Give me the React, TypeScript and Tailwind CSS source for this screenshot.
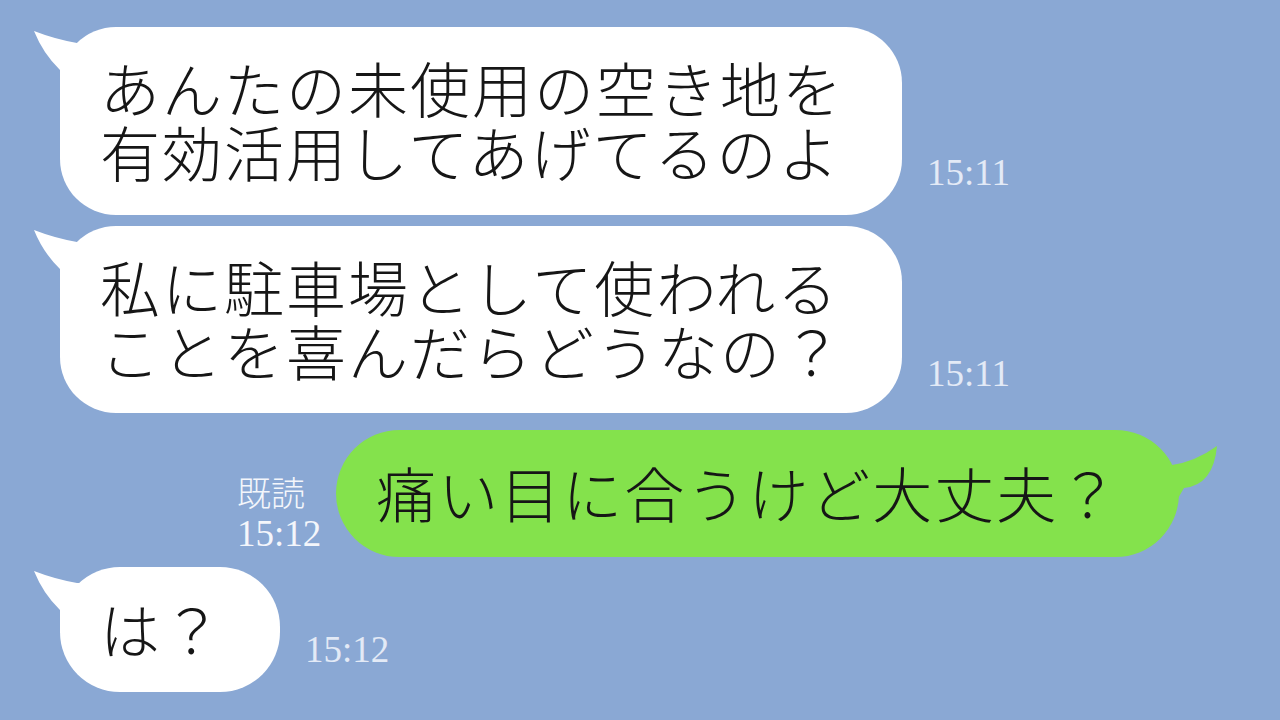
import React from "react";

const jp = {
  fontFamily:
    '"Noto Sans CJK JP Light", "Noto Sans CJK JP DemiLight", "Noto Sans CJK JP", "Noto Sans", sans-serif',
};
const serif = { fontFamily: '"Liberation Serif", "DejaVu Serif", serif' };

function LeftTail() {
  return (
    <svg
      className="absolute left-[-30px] top-0"
      width="80"
      height="70"
      viewBox="0 0 80 70"
    >
      <path
        d="M4 4 Q24.5 12 47 16 L60 16 L60 66 L30 66 L30 43 Q13 26.5 4 4 Z"
        fill="#ffffff"
      />
    </svg>
  );
}

function RightTail() {
  return (
    <svg
      className="absolute right-[-43px] top-0"
      width="60"
      height="80"
      viewBox="0 0 60 80"
    >
      <path
        d="M55 16 Q33.5 31.5 10 35 L0 35 L0 70 L15 70 L22 58 Q51.5 55 55 16 Z"
        fill="#84e24c"
      />
    </svg>
  );
}

function Time({ t, mb }: { t: string; mb: string }) {
  return (
    <div
      className={`text-[37px] leading-[37px] font-light text-[#e3eaf6] ml-[25px] ${mb}`}
      style={serif}
    >
      {t}
    </div>
  );
}

const textCls =
  "relative text-[60px] leading-[64px] font-light tracking-[2px] text-[#161616] whitespace-nowrap mt-[-4px]";

export default function App() {
  return (
    <div className="w-[1280px] h-[720px] bg-[#8aa8d4] flex flex-col pt-[27px] overflow-hidden">
      {/* Row 1 */}
      <div className="flex items-end pl-[60px]">
        <div className="relative w-[842px] h-[188px] bg-white rounded-[56px] flex items-center pl-[40px]">
          <LeftTail />
          <div className={textCls} style={jp}>
            <div>あんたの未使用の空き地を</div>
            <div>有効活用してあげてるのよ</div>
          </div>
        </div>
        <Time t="15:11" mb="mb-[24px]" />
      </div>

      {/* Row 2 */}
      <div className="flex items-end pl-[60px] mt-[11px]">
        <div className="relative w-[842px] h-[187px] bg-white rounded-[56px] flex items-center pl-[40px]">
          <LeftTail />
          <div className={textCls} style={jp}>
            <div>私に駐車場として使われる</div>
            <div>ことを喜んだらどうなの？</div>
          </div>
        </div>
        <Time t="15:11" mb="mb-[21px]" />
      </div>

      {/* Row 3 */}
      <div className="flex items-end pl-[237px] mt-[17px]">
        <div className="flex flex-col mb-[5px] mr-[15px] text-[#f4f6fb]">
          <div
            className="text-[34px] leading-[34px] font-light mb-[6px]"
            style={jp}
          >
            既読
          </div>
          <div className="text-[37px] leading-[37px]" style={serif}>
            15:12
          </div>
        </div>
        <div className="relative w-[843px] h-[127px] bg-[#84e24c] rounded-full flex items-center pl-[40px]">
          <RightTail />
          <div className={textCls} style={jp}>
            痛い目に合うけど大丈夫？
          </div>
        </div>
      </div>

      {/* Row 4 */}
      <div className="flex items-end pl-[60px] mt-[10px]">
        <div className="relative w-[220px] h-[125px] bg-white rounded-[60px] flex items-center pl-[40px]">
          <LeftTail />
          <div className={textCls} style={jp}>
            は？
          </div>
        </div>
        <Time t="15:12" mb="mb-[24px]" />
      </div>
    </div>
  );
}
